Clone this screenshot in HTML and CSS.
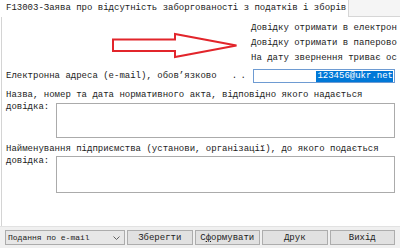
FILE: index.html
```html
<!DOCTYPE html>
<html lang="uk">
<head>
<meta charset="utf-8">
<title>F13003</title>
<link rel="stylesheet" href="styles.css">
</head>
<body>
<div class="app">
  <div class="tabbar">
    <div class="tab">F13003-Заява про відсутність заборгованості з податків і зборів</div>
    <div class="tabrest"></div>
  </div>
  <div class="panel">
    <div class="options">
      <div class="opt">Довідку отримати в електрон</div>
      <div class="opt">Довідку отримати в паперово</div>
      <div class="opt">На дату звернення триває ос</div>
    </div>
    <div class="email-row">
      <span class="label">Електронна адреса (e-mail), обов’язково<span class="dots">. .</span></span>
      <div class="input"><span class="sel">123456@ukr.net</span></div>
    </div>
    <div class="field first">
      <div class="line">Назва, номер та дата нормативного акта, відповідно якого надається</div>
      <div class="field-row">
        <span class="line">довідка:</span>
        <div class="area area1"></div>
      </div>
    </div>
    <div class="field second">
      <div class="line">Найменування підприємства (установи, організації), до якого подається</div>
      <div class="field-row">
        <span class="line">довідка:</span>
        <div class="area area2"></div>
      </div>
    </div>
  </div>
  <div class="bottombar">
    <div class="select">
      <span>Подання по e-mail</span>
      <svg class="chev" width="7" height="4" viewBox="0 0 7 4"><polyline points="0.5,0.5 3.5,3.5 6.5,0.5" fill="none" stroke="#606060" stroke-width="1"/></svg>
    </div>
    <div class="btn">Зберегти</div>
    <div class="btn">С<u>ф</u>ормувати</div>
    <div class="btn">Друк</div>
    <div class="btn">Вихід</div>
  </div>
  <svg class="arrow" width="400" height="248" viewBox="0 0 400 248">
    <polygon points="113,39.5 175,39.5 175,34 236.5,45.5 175,57 175,51 113,51" fill="#ffffff" stroke="#e2252b" stroke-width="2" stroke-linejoin="miter"/>
  </svg>
</div>
</body>
</html>
```

FILE: styles.css
```css
* { box-sizing: border-box; }
html, body { margin: 0; padding: 0; }
body {
  width: 400px;
  height: 248px;
  overflow: hidden;
  background: #ffffff;
  font-family: "Liberation Mono", "DejaVu Sans Mono", monospace;
  font-size: 9px;
  color: #1c1c1c;
}
.app {
  position: relative;
  width: 400px;
  height: 248px;
  display: flex;
  flex-direction: column;
}
.tabbar {
  height: 17px;
  display: flex;
  flex: none;
}
.tab {
  width: 349px;
  padding-left: 6px;
  line-height: 16px;
  background: #ffffff;
  border-right: 1px solid #d6d6d6;
  white-space: nowrap;
  overflow: hidden;
}
.tabrest {
  flex: 1;
  background: #f5f5f5;
  border-bottom: 1px solid #d6d6d6;
}
.panel {
  flex: 1;
  display: flex;
  flex-direction: column;
  margin-left: 1px;
  border-left: 1px solid #d4d4d4;
  padding: 4px 5px 0 4px;
  background: #ffffff;
}
.options {
  padding-left: 245px;
  white-space: nowrap;
  margin-right: -5px;
}
.opt {
  line-height: 15px;
  height: 15px;
}
.email-row {
  display: flex;
  align-items: center;
  justify-content: space-between;
  height: 18px;
  margin-top: 1px;
}
.label { white-space: nowrap; }
.dots {
  margin-left: 15px;
  letter-spacing: -1px;
}
.input {
  width: 142px;
  height: 14px;
  border: 1px solid #6e9bd2;
  display: flex;
  align-items: center;
  justify-content: flex-end;
  padding-right: 1px;
}
.sel {
  background: #0078d7;
  color: #ffffff;
  line-height: 11px;
  padding: 0 0 0 1px;
}
.field { display: flex; flex-direction: column; }
.field.first { margin-top: 4px; }
.field.second { margin-top: 5px; }
.line {
  line-height: 12px;
  white-space: nowrap;
}
.field-row {
  display: flex;
  justify-content: space-between;
  align-items: flex-start;
}
.area {
  width: 339px;
  background: #ffffff;
  border: 1px solid #ababab;
}
.area1 { height: 35px; margin-top: 2px; }
.area2 { height: 37px; margin-top: 1px; }
.bottombar {
  flex: none;
  height: 22px;
  background: #f0f0f0;
  border-top: 1px solid #e2e2e2;
  padding: 3px 5px 0 5px;
  display: grid;
  grid-template-columns: 120px repeat(4, 1fr);
  column-gap: 2px;
  align-items: start;
}
.select {
  height: 15px;
  background: #e7e7e7;
  border: 1px solid #acacac;
  display: flex;
  align-items: center;
  justify-content: space-between;
  padding: 0 4px 0 2px;
  font-size: 8px;
}
.chev { display: block; }
.btn {
  height: 15px;
  background: #e1e1e1;
  border: 1px solid #adadad;
  display: flex;
  align-items: center;
  justify-content: center;
}
.btn u { text-decoration-thickness: 1px; text-underline-offset: 1px; }
.arrow {
  position: absolute;
  left: 0;
  top: 0;
  pointer-events: none;
}
```
